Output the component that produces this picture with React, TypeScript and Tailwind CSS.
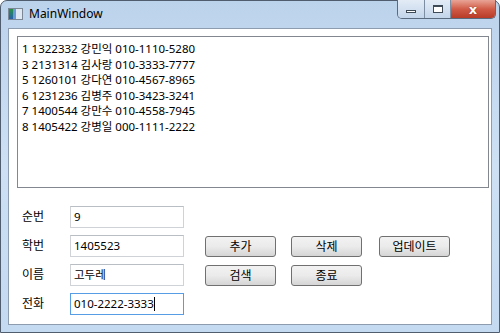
import React, { useState } from "react";

const rows = [
  "1 1322332 강민익 010-1110-5280",
  "3 2131314 김사랑 010-3333-7777",
  "5 1260101 강다연 010-4567-8965",
  "6 1231236 김병주 010-3423-3241",
  "7 1400544 강만수 010-4558-7945",
  "8 1405422 강병일 000-1111-2222",
];

const font = { fontFamily: '"Noto Sans", "Noto Sans CJK KR", sans-serif' };

function Field({ label, value, focused }: { label: string; value: string; focused?: boolean }) {
  return (
    <div className="flex items-center h-[22px]">
      <span className="w-[53px] text-[12px] text-black pl-[5px]">{label}</span>
      <div
        className={
          focused
            ? "w-[114px] h-[22px] border border-[#569de5] bg-white flex items-center px-[3px] text-[11.5px]"
            : "w-[114px] h-[22px] border border-[#cfd3d8] border-t-[#b9bec5] bg-white flex items-center px-[3px] text-[11.5px]"
        }
      >
        {value}
        {focused && <span className="w-px h-[14px] bg-black" />}
      </div>
    </div>
  );
}

function Btn({ children }: { children: React.ReactNode }) {
  return (
    <button className="w-[71px] h-[21px] rounded-[3px] border border-[#707070] bg-gradient-to-b from-[#f2f2f2] via-[#ebebeb] to-[#d5d5d5] text-[12px] text-black flex items-center justify-center">
      {children}
    </button>
  );
}

export default function App() {
  const [sel] = useState(-1);
  return (
    <div style={font} className="w-[500px] h-[333px] bg-white">
      <div className="w-[500px] h-[333px] flex flex-col rounded-t-[7px] border border-[#4f5d6e] bg-gradient-to-b from-[#bcd3ec] via-[#cde0f4] to-[#c4daf1] px-[7px] pb-[7px]">
        {/* title bar */}
        <div className="h-[27px] flex items-start relative">
          <div className="flex items-center gap-[6px] pt-[7px] pl-[0px]">
            <div className="w-[15px] h-[12px] border border-[#7b8794] bg-white flex">
              <div className="w-[4px] h-full bg-gradient-to-b from-[#2d8f3a] to-[#2b5da8]" />
              <div className="w-[3px] h-full bg-[#6b9bd6]" />
              <div className="flex-1 bg-[#dfe8f2]" />
            </div>
            <span className="text-[12px] text-black leading-none">MainWindow</span>
          </div>
          <div className="absolute right-[-4px] top-[-1px] flex h-[19px] border border-[#5b6b7f] border-t-0 rounded-b-[5px] overflow-hidden">
            <div className="w-[27px] bg-gradient-to-b from-[#e3ecf6] to-[#c3d5ea] border-r border-[#7d8ea3] flex items-center justify-center">
              <div className="w-[10px] h-[3px] border border-[#3f4a57] bg-white mt-[5px]" />
            </div>
            <div className="w-[26px] bg-gradient-to-b from-[#e3ecf6] to-[#c3d5ea] border-r border-[#7d8ea3] flex items-center justify-center">
              <div className="w-[10px] h-[8px] border border-[#3f4a57] border-t-2 bg-white" />
            </div>
            <div className="w-[44px] bg-gradient-to-b from-[#e8a496] via-[#d05b47] to-[#b83b27] flex items-center justify-center">
              <span className="text-white text-[13px] font-bold leading-none" style={{ fontFamily: '"DejaVu Sans", sans-serif', textShadow: "0 0 1px #5a1a10" }}>x</span>
            </div>
          </div>
        </div>

        {/* client area */}
        <div className="flex-1 bg-white border border-[#8d9cae] pt-[7px] pl-[8px] pr-[2px] flex flex-col">
          <div className="h-[152px] border border-[#828790] pt-[4px] pl-[4px] text-[11.5px] text-black">
            {rows.map((r, i) => (
              <div key={i} className={i === sel ? "h-[15.5px] bg-[#3399ff] text-white" : "h-[15.5px] leading-[15.5px]"}>
                {r}
              </div>
            ))}
          </div>

          <div className="flex mt-[18px]">
            <div className="flex flex-col gap-[7px]">
              <Field label="순번" value="9" />
              <Field label="학번" value="1405523" />
              <Field label="이름" value="고두레" />
              <Field label="전화" value="010-2222-3333" focused />
            </div>
            <div className="flex flex-col gap-[8px] pt-[30px] pl-[21px]">
              <div className="flex gap-[15px]">
                <Btn>추가</Btn>
                <Btn>삭제</Btn>
                <div className="pl-[2px]">
                  <Btn>업데이트</Btn>
                </div>
              </div>
              <div className="flex gap-[15px]">
                <Btn>검색</Btn>
                <Btn>종료</Btn>
              </div>
            </div>
          </div>
        </div>
      </div>
    </div>
  );
}
